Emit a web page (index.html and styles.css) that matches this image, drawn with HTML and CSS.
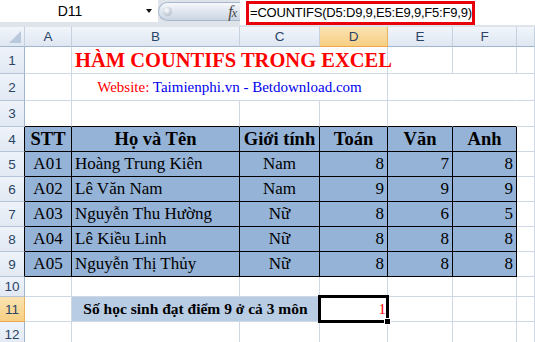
FILE: index.html
```html
<!DOCTYPE html>
<html lang="vi">
<head>
  <meta charset="UTF-8" />
  <title>Hàm COUNTIFS trong Excel</title>
  <link rel="stylesheet" href="styles.css">
</head>
<body>

  <!-- Formula bar -->
  <div class="fbar">
    <div class="namebox"><span class="ref">D11</span><span class="drop"></span></div>
    <div class="fxbtn"><span class="knob"></span><span class="fx"><i>f</i><i class="x">x</i></span></div>
    <div class="formula"><div class="fbox">=COUNTIFS(D5:D9,9,E5:E9,9,F5:F9,9)</div></div>
  </div>

  <!-- Sheet -->
  <table class="sheet">
    <colgroup>
      <col class="c-rh"><col class="c-a"><col class="c-b"><col class="c-c"><col class="c-d"><col class="c-e"><col class="c-f"><col class="c-g">
    </colgroup>
    <thead>
      <tr class="hrow">
        <th class="corner"><span class="tri"></span></th>
        <th>A</th><th>B</th><th>C</th><th class="sel">D</th><th>E</th><th>F</th><th></th>
      </tr>
    </thead>
    <tbody>
      <tr class="r1">
        <th>1</th><td></td><td colspan="3" class="title">HÀM COUNTIFS TRONG EXCEL</td><td></td><td></td><td></td>
      </tr>
      <tr class="r2">
        <th>2</th><td></td><td colspan="3" class="site"><span class="red">Website:</span> Taimienphi.vn - Betdownload.com</td><td class="nv"></td><td class="nv"></td><td></td>
      </tr>
      <tr class="r3">
        <th>3</th><td class="tt"></td><td class="tt"></td><td class="tt"></td><td class="tt"></td><td class="tt nv"></td><td class="tt nv"></td><td></td>
      </tr>
      <tr class="r4 head">
        <th class="tl">4</th><td class="t c">STT</td><td class="t c">Họ và Tên</td><td class="t c">Giới tính</td><td class="t c">Toán</td><td class="t c">Văn</td><td class="t c">Anh</td><td></td>
      </tr>
      <tr class="rd">
        <th class="tl">5</th><td class="t c">A01</td><td class="t">Hoàng Trung Kiên</td><td class="t c">Nam</td><td class="t n">8</td><td class="t n">7</td><td class="t n">8</td><td></td>
      </tr>
      <tr class="rd">
        <th class="tl">6</th><td class="t c">A02</td><td class="t">Lê Văn Nam</td><td class="t c">Nam</td><td class="t n">9</td><td class="t n">9</td><td class="t n">9</td><td></td>
      </tr>
      <tr class="rd">
        <th class="tl">7</th><td class="t c">A03</td><td class="t">Nguyễn Thu Hường</td><td class="t c">Nữ</td><td class="t n">8</td><td class="t n">6</td><td class="t n">5</td><td></td>
      </tr>
      <tr class="rd">
        <th class="tl">8</th><td class="t c">A04</td><td class="t">Lê Kiều Linh</td><td class="t c">Nữ</td><td class="t n">8</td><td class="t n">8</td><td class="t n">8</td><td></td>
      </tr>
      <tr class="rd">
        <th class="tl">9</th><td class="t c">A05</td><td class="t">Nguyễn Thị Thủy</td><td class="t c">Nữ</td><td class="t n">8</td><td class="t n">8</td><td class="t n">8</td><td></td>
      </tr>
      <tr class="r10">
        <th>10</th><td></td><td></td><td></td><td></td><td></td><td></td><td></td>
      </tr>
      <tr class="r11">
        <th class="sel">11</th><td></td><td colspan="2" class="label">Số học sinh đạt điểm 9 ở cả 3 môn</td><td class="active">1</td><td></td><td></td><td></td>
      </tr>
      <tr class="r12">
        <th>12</th><td></td><td></td><td></td><td></td><td></td><td></td><td></td>
      </tr>
    </tbody>
  </table>

</body>
</html>
```

FILE: styles.css
```css
body { margin: 0; width: 535px; height: 342px; overflow: hidden; background: #fff; font-family: "Liberation Serif", serif; color: #000; }

/* formula bar */
.fbar { display: flex; align-items: flex-start; height: 27px; background: #dfe4eb; }
.namebox { display: flex; align-items: center; width: 158px; height: 22px; background: #fff; font: 14px "Liberation Sans", sans-serif; }
.namebox .ref { width: 140px; text-align: center; }
.namebox .drop { margin-left: 6px; border-top: 4px solid #111; border-left: 3.5px solid transparent; border-right: 3.5px solid transparent; }
.fxbtn { display: flex; align-items: center; justify-content: space-between; box-sizing: border-box; width: 82px; height: 19px; margin-top: 2px; padding: 0 4px; border: 1px solid #a8b8cc; border-right: none; border-radius: 10px 0 0 10px; background: linear-gradient(#f6f8fb, #dde4ee 55%, #cbd5e2); }
.knob { width: 9px; height: 9px; border-radius: 50%; background: radial-gradient(circle at 40% 35%, #fff, #c3ccd6 60%, #a6b0bc); }
.fx { font: italic 16px "Liberation Serif", serif; color: #444; letter-spacing: -1px; }
.fx .x { font-size: 12px; }
.formula { flex: 1; height: 25px; background: #fff; padding-top: 1px; box-sizing: border-box; }
.fbox { display: inline-block; box-sizing: border-box; height: 24px; width: 229px; margin-left: 6px; padding-left: 1px; border: 3px solid #e8000b; font: 13px/18px "Liberation Sans", sans-serif; letter-spacing: -0.2px; white-space: nowrap; }

/* sheet */
.sheet { table-layout: fixed; width: 535px; border-collapse: separate; border-spacing: 0; }
.c-rh { width: 25px; } .c-a { width: 47px; } .c-b { width: 168px; } .c-c { width: 80px; }
.c-d { width: 68px; } .c-e { width: 65px; } .c-f { width: 64px; } .c-g { width: 18px; }
.sheet td, .sheet th { box-sizing: border-box; padding: 0 3px; border-right: 1px solid #d0d7e5; border-bottom: 1px solid #d0d7e5; vertical-align: middle; white-space: nowrap; overflow: visible; }

.sheet th { padding: 0; font: 13.5px "Liberation Sans", sans-serif; color: #2a4466; text-align: center; font-weight: normal; background: linear-gradient(#eef3fa, #e2e9f3); border-right-color: #9fb3cb; border-bottom-color: #b5c5d9; }
.hrow th { background: linear-gradient(#f1f5fb, #dfe7f2); border-right-color: #c5d1df; border-bottom-color: #9eb6ce; }
.sheet th.sel { background: linear-gradient(#fbe3b2, #f6cf82); border-right-color: #e7b462; border-bottom-color: #f2a84a; }
.corner { position: relative; }
.corner .tri { position: absolute; right: 3px; bottom: 3px; width: 0; height: 0; border-left: 12px solid transparent; border-bottom: 12px solid #b9c8db; }

.hrow { height: 20px; }
.r1, .r2 { height: 27px; }
.r3 { height: 26px; }
.r4, .rd, .r11, .r12 { height: 25px; }
.r10 { height: 20px; }

.title { text-align: center; color: #ff0000; font-weight: bold; font-size: 20.5px; padding: 0; }
.site { text-align: center; color: #0000ee; font-size: 15px; }
.site .red { color: #ff0000; }
.sheet td.nv { border-right-color: transparent; }
.sheet td.tt { border-bottom-color: #000; }

.sheet td.t { background: #95b3d7; border-right-color: #000; border-bottom-color: #000; font-size: 17px; }
.sheet th.tl { border-right-color: #000; }
.head td.t { font-weight: bold; font-size: 18.5px; }
.t.c { text-align: center; }
.t.n { text-align: right; }

.label { background: #b8cce4; text-align: center; font-weight: bold; font-size: 15.5px; }
.sheet td.active { position: relative; padding-right: 1px; text-align: right; color: #ff0000; font-size: 15px; }
.active::after { content: ""; position: absolute; left: -2px; top: -2px; right: -2px; bottom: -2px; border: 3px solid #000; }
.active::before { content: ""; position: absolute; right: -4px; bottom: -4px; width: 5px; height: 5px; background: #000; border: 1px solid #fff; z-index: 1; }
```
